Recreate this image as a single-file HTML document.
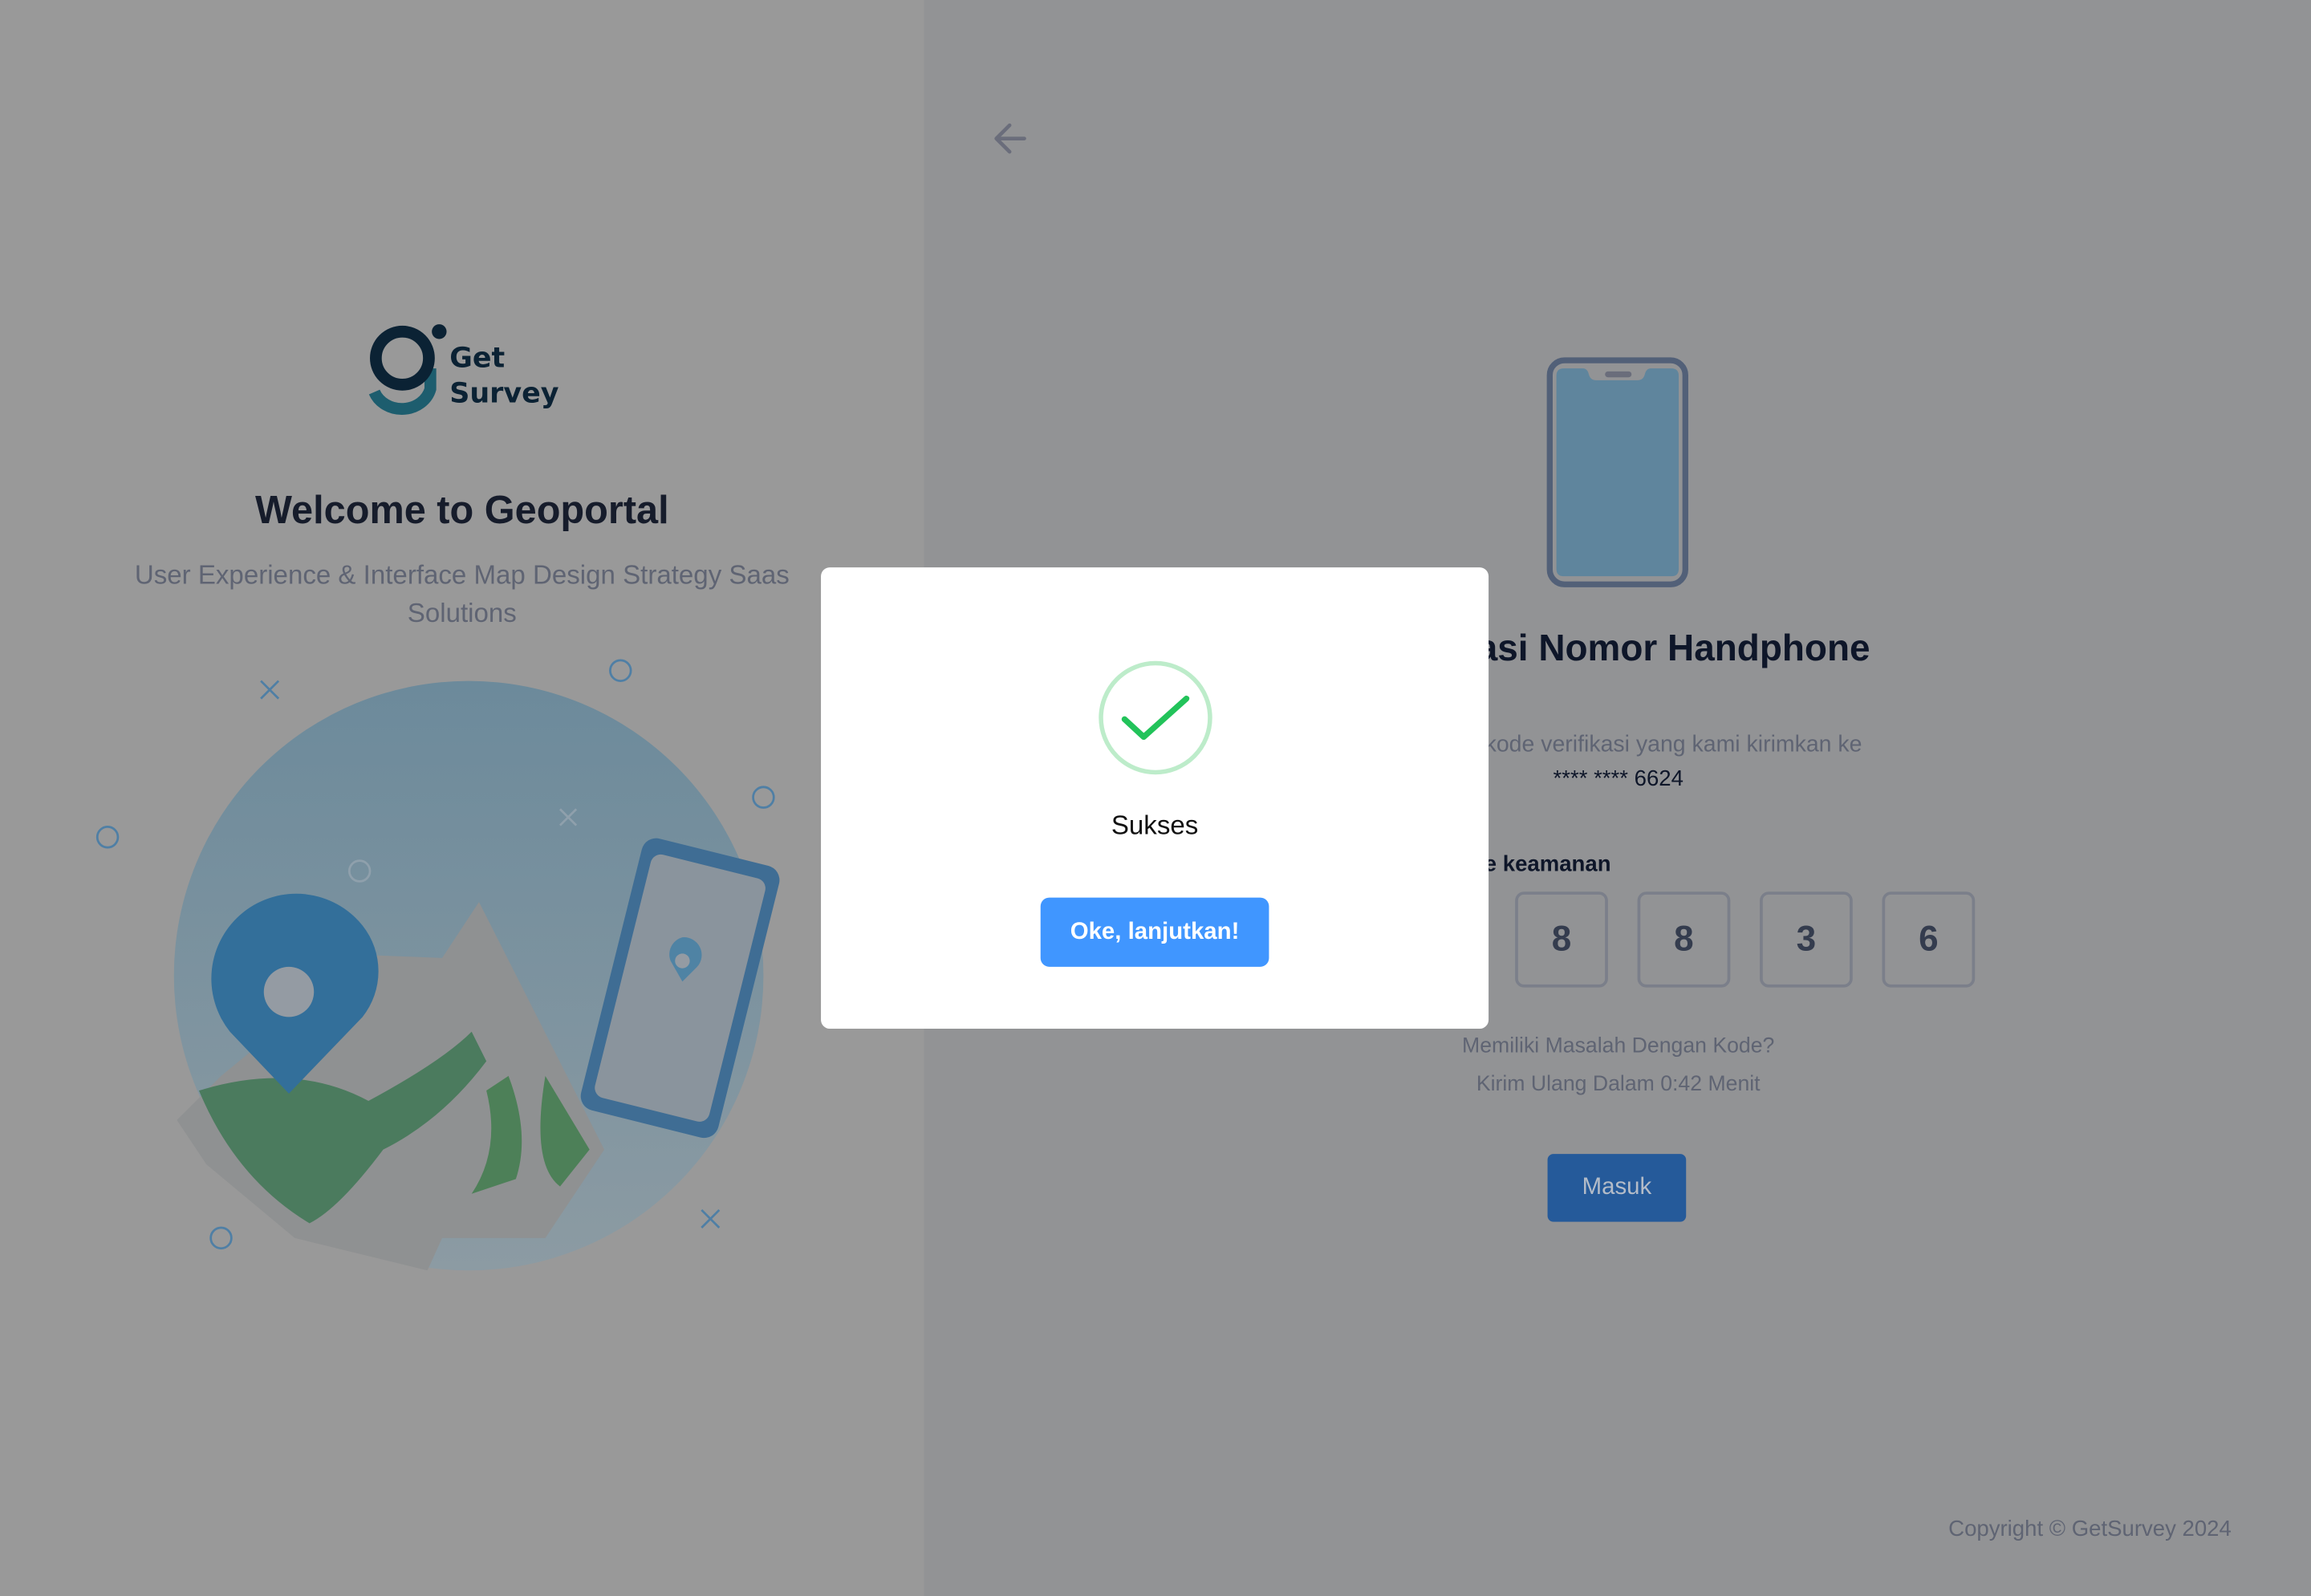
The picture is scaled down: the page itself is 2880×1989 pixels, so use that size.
<!DOCTYPE html>
<html><head><meta charset="utf-8"><style>
html,body{margin:0;padding:0;width:2880px;height:1988px;overflow:hidden;background:#929395}
#s{position:absolute;left:0;top:0;width:1568px;height:1083px;transform:scale(1.83673);transform-origin:0 0;font-family:"Liberation Sans",sans-serif}
.a{position:absolute}
.c{position:absolute;text-align:center;white-space:nowrap}
.o{width:59px;height:61px;border:2px solid #7b7f8a;border-radius:6px;font-size:24px;font-weight:bold;color:#343c4e;display:flex;align-items:center;justify-content:center}
</style></head><body><div id="s">
<div class="a" style="left:0;top:0;width:627px;height:1083px;background:#999999"></div>
<div class="a" style="left:627px;top:0;width:941px;height:1083px;background:#929395"></div>

<svg class="a" style="left:248px;top:216px" width="140" height="72" viewBox="0 0 140 72">
<path d="M6 50 A20 18 0 0 0 44 48 L44 34" fill="none" stroke="#1d5d6e" stroke-width="8"/>
<ellipse cx="25" cy="27" rx="18" ry="18" fill="none" stroke="#0b2234" stroke-width="8"/>
<circle cx="50" cy="9" r="5" fill="#0b2234"/>
<text x="57" y="33" font-family="DejaVu Sans" font-weight="bold" font-size="19" fill="#0b2234">Get</text>
<text x="57" y="57" font-family="DejaVu Sans" font-weight="bold" font-size="19" fill="#0b2234">Survey</text>
</svg>
<div class="c" style="left:0;width:627px;top:331px;font-size:26.5px;font-weight:bold;color:#161c2b">Welcome to Geoportal</div>
<div class="c" style="left:60px;width:507px;top:377px;font-size:18px;line-height:26px;color:#5f6473;white-space:normal">User Experience &amp; Interface Map Design Strategy Saas Solutions</div>

<svg class="a" style="left:50px;top:440px" width="500" height="440" viewBox="50 440 500 440">
<defs><linearGradient id="g1" x1="0" y1="0" x2="0" y2="1"><stop offset="0" stop-color="#6c8a9b"/><stop offset="1" stop-color="#8c9ba3"/></linearGradient></defs>
<circle cx="318" cy="662" r="200" fill="url(#g1)"/>
<path d="M120 760 L150 730 L250 648 L300 650 L325 612 L410 780 L370 840 L300 840 L290 862 L200 840 L140 790Z" fill="#8f9192"/>
<path d="M135 740 Q200 720 250 747 Q300 720 320 700 L330 720 Q300 760 260 780 Q230 820 210 830 Q160 800 135 740Z" fill="#4b7b5e"/>
<path d="M330 740 Q340 780 320 810 L350 800 Q360 770 345 730Z" fill="#4d8058"/>
<path d="M370 730 Q360 790 380 805 L400 780Z" fill="#4d8058"/>
<path d="M246 628 A50 50 0 0 1 246 690 L196 742 L156 700 A50 50 0 0 1 246 628Z" fill="#336f9a"/>
<circle cx="196" cy="673" r="17" fill="#949ba3"/>
<g transform="rotate(14 460 668)"><rect x="414" y="575" width="96" height="190" rx="10" fill="#3f6d94"/><rect x="422" y="585" width="80" height="170" rx="7" fill="#8a949d"/></g>
<path d="M463 636 a12 12 0 0 1 10 20 l-10 10 l-8 -14 a12 12 0 0 1 8 -16z" fill="#4f83a4"/>
<circle cx="463" cy="652" r="5" fill="#949ba3"/>
<g stroke="#4f7fa5" stroke-width="1.5" fill="none"><path d="M177 462l12 12M189 462l-12 12M476 821l12 12M488 821l-12 12"/><circle cx="421" cy="455" r="7"/><circle cx="518" cy="541" r="7"/><circle cx="73" cy="568" r="7"/><circle cx="150" cy="840" r="7"/></g>
<g stroke="#8fa0ac" stroke-width="1.5" fill="none"><path d="M380 549l11 11M391 549l-11 11"/><circle cx="244" cy="591" r="7"/></g>
</svg>

<svg class="a" style="left:673px;top:82px" width="26" height="26" viewBox="0 0 26 26"><path d="M22 12H4M12 3L3 12L12 21" fill="none" stroke="#6a6d7b" stroke-width="2.5" stroke-linecap="round" stroke-linejoin="round"/></svg>
<svg class="a" style="left:1049px;top:242px" width="97" height="157" viewBox="0 0 97 157"><rect x="2.5" y="2.5" width="92" height="152" rx="10" fill="none" stroke="#526078" stroke-width="4"/><path d="M12 8 H25 Q28 8 29 12 Q30 16 34 16 H62 Q66 16 67 12 Q68 8 71 8 H85 Q90 8 90 13 V144 Q90 149 85 149 H12 Q7 149 7 144 V13 Q7 8 12 8Z" fill="#5f859d"/><rect x="40" y="10" width="18" height="4" rx="2" fill="#6a6d7b"/></svg>
<div class="c" style="left:850px;width:496px;top:426px;font-size:25px;font-weight:bold;color:#0e1629">Verifikasi Nomor Handphone</div>
<div class="c" style="left:850px;width:496px;top:497px;font-size:15.5px;color:#5f6473">Masukkan kode verifikasi yang kami kirimkan ke</div>
<div class="c" style="left:850px;width:496px;top:520px;font-size:15px;color:#0e1629">**** **** 6624</div>
<div class="a" style="right:475px;top:578px;font-size:15px;font-weight:bold;color:#0e1629">Masukkan kode keamanan</div>
<div class="a" style="left:862px;top:605px;display:flex;gap:20px">
<div class="o">3</div><div class="o">2</div><div class="o">8</div><div class="o">8</div><div class="o">3</div><div class="o">6</div>
</div>
<div class="c" style="left:850px;width:496px;top:702px;font-size:14.5px;color:#5f6473">Memiliki Masalah Dengan Kode?</div>
<div class="c" style="left:850px;width:496px;top:728px;font-size:14.5px;color:#5f6473">Kirim Ulang Dalam 0:42 Menit</div>
<div class="a" style="left:1050px;top:783px;width:94px;height:46px;background:#255a9a;border-radius:4px;color:#b4bcc8;font-size:16px;line-height:46px;text-align:center">Masuk</div>
<div class="a" style="right:54px;top:1029px;font-size:15px;color:#5f6473">Copyright © GetSurvey 2024</div>

<div class="a" style="left:557px;top:385px;width:453px;height:313px;background:#fff;border-radius:6px"></div>
<svg class="a" style="left:744px;top:447px" width="80" height="80" viewBox="0 0 80 80"><circle cx="40" cy="40" r="37" fill="none" stroke="#bdecca" stroke-width="3"/><path d="M19 41 L32 53 L61 27" fill="none" stroke="#22c35a" stroke-width="4" stroke-linecap="round" stroke-linejoin="round"/></svg>
<div class="c" style="left:557px;width:453px;top:550px;font-size:18px;color:#111">Sukses</div>
<div class="a" style="left:706px;top:609px;width:155px;height:47px;background:#4096ff;border-radius:6px;color:#fff;font-size:16px;font-weight:bold;line-height:47px;text-align:center">Oke, lanjutkan!</div>
</div></body></html>
